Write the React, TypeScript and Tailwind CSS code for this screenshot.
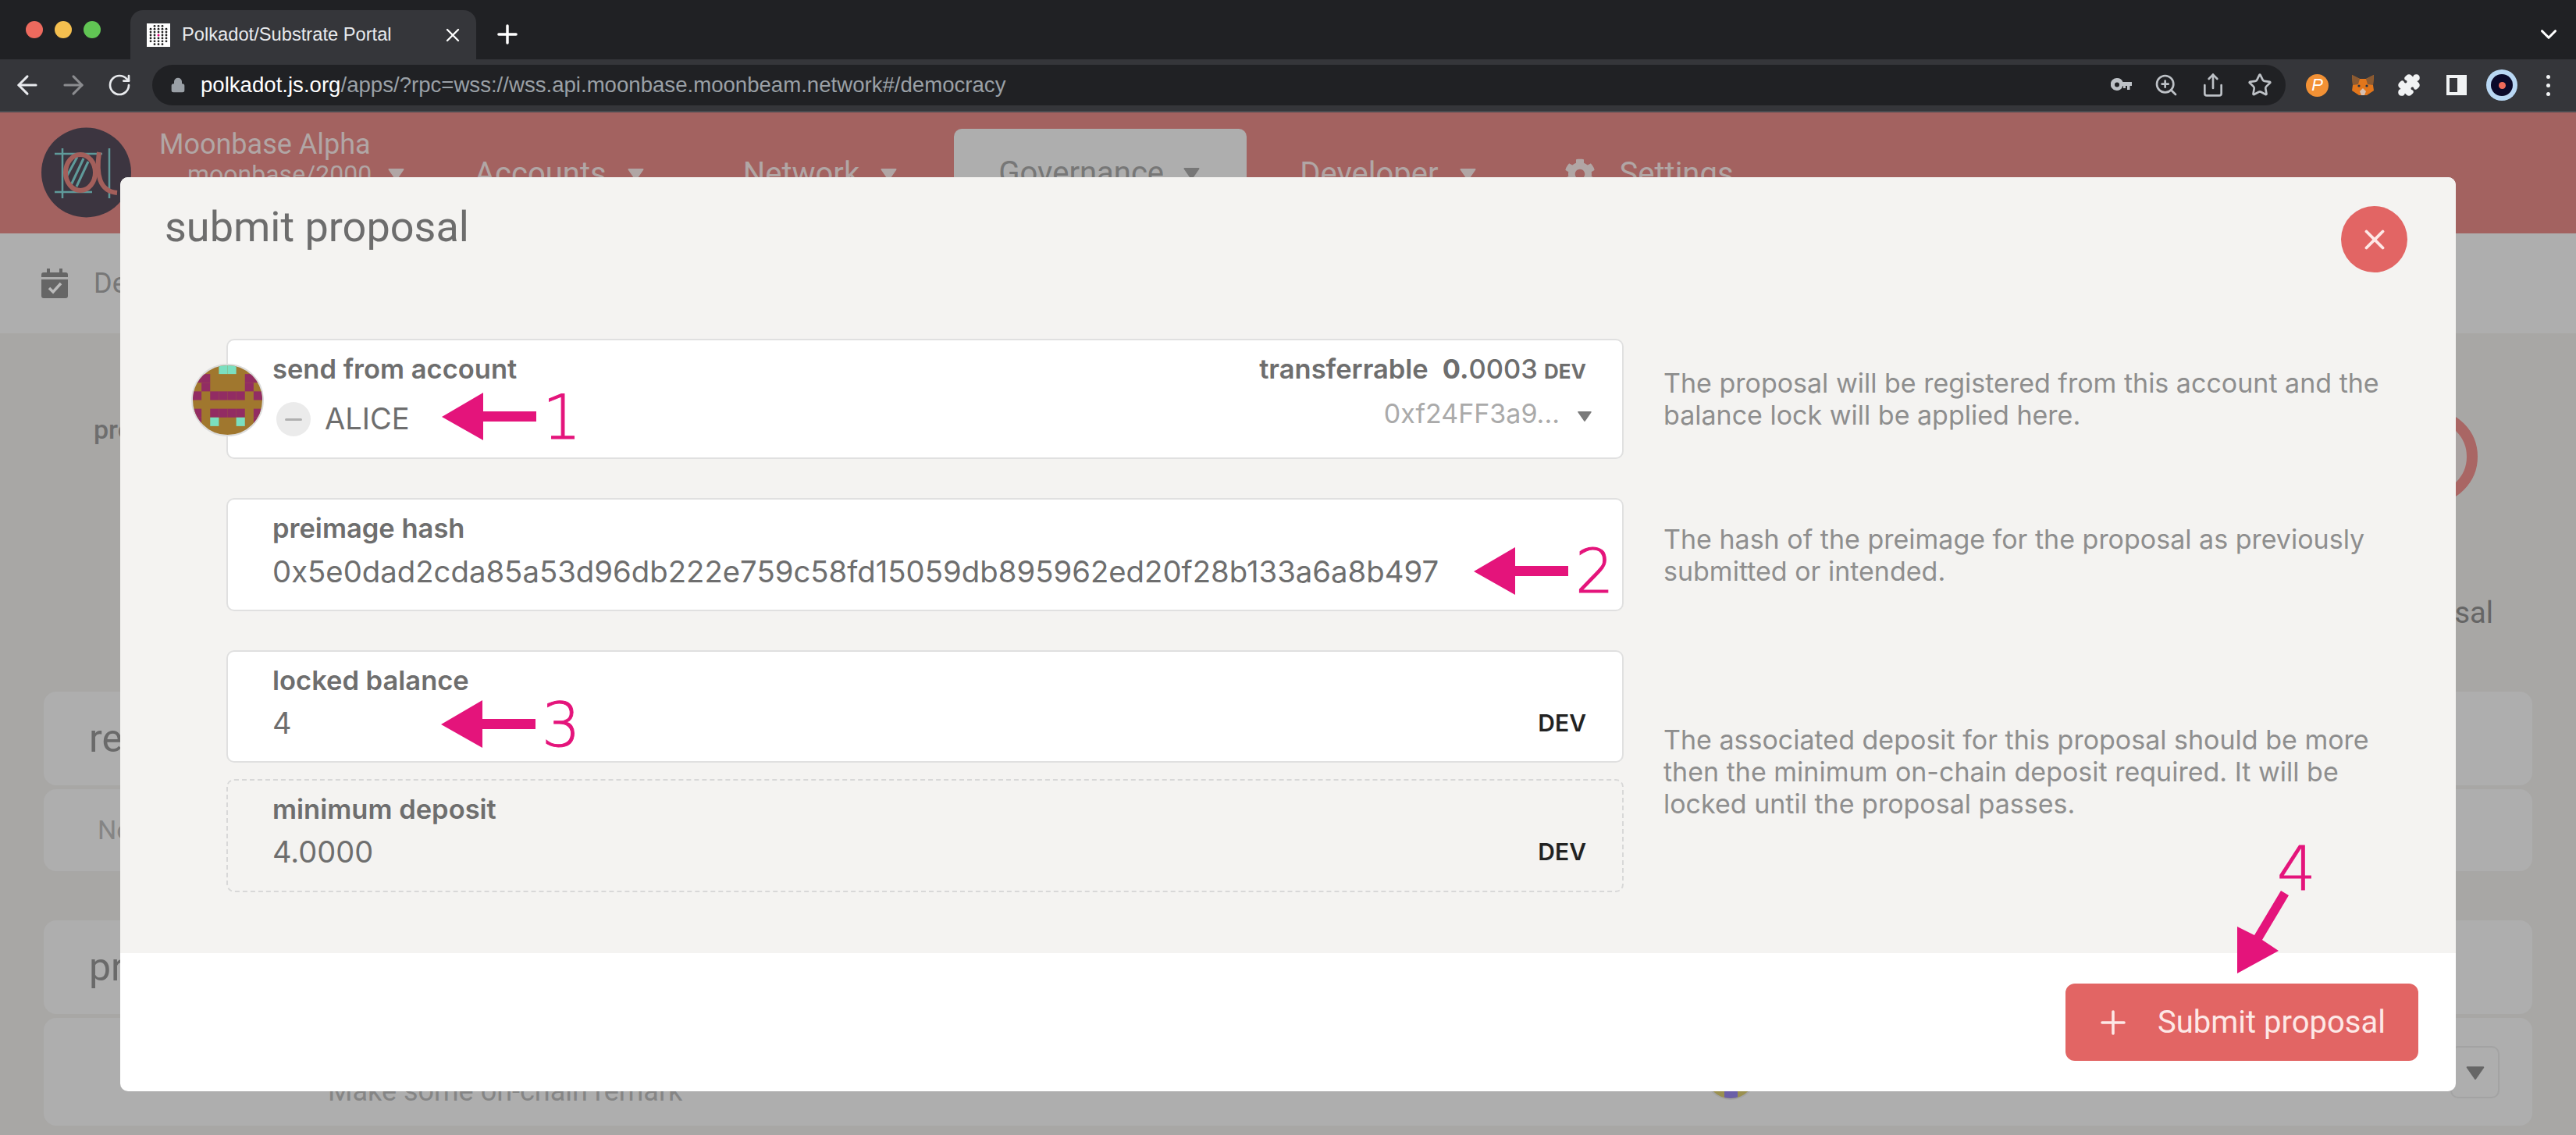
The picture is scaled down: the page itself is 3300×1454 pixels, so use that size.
import { X, Plus, ArrowLeft, ArrowRight, RotateCw, Lock, ZoomIn, Share, Star, Puzzle, ChevronDown } from "lucide-react";
import { FaCog } from "react-icons/fa";

const font = "font-['Roboto',sans-serif]";
const formFont = "font-['Inter',sans-serif]";

function Caret({ className }: { className: string }) {
  return (
    <svg viewBox="0 0 20 16" className={className} fill="currentColor">
      <path d="M1 2 H19 L10 15 Z" stroke="currentColor" strokeWidth="2" strokeLinejoin="round" />
    </svg>
  );
}

const identiconRows = [
  "...TT...",
  "PP....PP",
  ".P....P.",
  "P.PPPP.P",
  "........",
  "P.PPPP.P",
  "P.T..T.P",
  "........",
];

function Identicon() {
  return (
    <svg viewBox="0 0 80 80" className="h-[93px] w-[93px] rounded-full border-[2px] border-[#dcdcdc] bg-[#a0772e]">
      {identiconRows.map((row, y) =>
        row.split("").map((c, x) =>
          c === "." ? null : (
            <rect key={x + "-" + y} x={x * 10} y={y * 10} width="10" height="10" fill={c === "P" ? "#922c63" : "#7bdfc0"} />
          )
        )
      )}
    </svg>
  );
}

function Logo() {
  return (
    <svg viewBox="0 0 115 116" className="h-[116px] w-[115px] shrink-0">
      <circle cx="57.5" cy="58" r="57.5" fill="#3c3540" />
      <g stroke="#5f9a9a" strokeWidth="2.5">
        <path d="M27 27 V91 M87 27 V91 M17 34 H78 M17 83 H65" />
      </g>
      <path d="M38 74 L54 40 M45 76 L60 44 M33 62 L46 38" stroke="#5f9a9a" strokeWidth="3" />
      <ellipse cx="50" cy="58" rx="19" ry="23" fill="none" stroke="#a35f5b" strokeWidth="6" />
      <path d="M74 32 C70 60 74 82 97 84" fill="none" stroke="#a35f5b" strokeWidth="6" />
    </svg>
  );
}

function Favicon() {
  const dots = [];
  for (let y = 0; y < 7; y++) {
    for (let x = 0; x < 5; x++) {
      const cx = 15 + (x - 2) * 5;
      const cy = 15 + (y - 3) * 3.9;
      if (Math.hypot(cx - 15, cy - 15) < 13.5 && !(x === 2 && y === 3)) {
        dots.push(<circle key={x + "-" + y} cx={cx} cy={cy} r="1.4" fill="#222" />);
      }
    }
  }
  return (
    <svg viewBox="0 0 30 30" className="h-[30px] w-[30px] bg-white">
      {dots}
      <circle cx="15" cy="15" r="1.5" fill="#e6007a" />
    </svg>
  );
}

function Fox() {
  return (
    <svg viewBox="0 0 30 28" className="h-[28px] w-[30px]">
      <path d="M1 1 L11 6 H19 L29 1 L28 14 L29 21 L20 27 H10 L1 21 L2 14 Z" fill="#e2761b" />
      <path d="M1 1 L11 6 L9 13 L2 14 Z M29 1 L19 6 L21 13 L28 14 Z" fill="#8a5a32" />
      <path d="M11 22 L15 18 L19 22 L17 27 H13 Z" fill="#d7c1b3" />
      <circle cx="10" cy="15" r="1.6" fill="#233447" />
      <circle cx="20" cy="15" r="1.6" fill="#233447" />
    </svg>
  );
}

function KeyIcon() {
  return (
    <svg viewBox="0 0 27 20" className="h-[20px] w-[27px]" fill="#bdc1c6">
      <path fillRule="evenodd" d="M8 1 A8 8 0 0 1 15.5 6 H27 V11 H24.5 V16 H21 V11 H19 V14 H16 V11 H15.5 A8 8 0 1 1 8 1 Z M8 6.5 A3 3 0 1 0 8 12.5 A3 3 0 1 0 8 6.5 Z" />
    </svg>
  );
}

function CalendarIcon() {
  return (
    <svg viewBox="0 0 34 38" className="h-[38px] w-[34px]">
      <path d="M7 0 H11 V5 H23 V0 H27 V5 H31 A3 3 0 0 1 34 8 V35 A3 3 0 0 1 31 38 H3 A3 3 0 0 1 0 35 V8 A3 3 0 0 1 3 5 H7 Z" fill="#666" />
      <rect x="0" y="11" width="34" height="3" fill="#aeaeae" />
      <path d="M10 25 L15 30 L25 19" fill="none" stroke="#bbb" strokeWidth="3.5" />
    </svg>
  );
}

function Chrome() {
  return (
    <div className="font-['Liberation_Sans',sans-serif]">
      <div className="flex h-[76px] items-end bg-[#202124]">
        <div className="flex h-[49px] w-[167px] items-start gap-[15px] self-start pl-[33px] pt-[27px]">
          <span className="h-[22px] w-[22px] shrink-0 rounded-full bg-[#ed6a5e]" />
          <span className="h-[22px] w-[22px] shrink-0 rounded-full bg-[#f4bf4f]" />
          <span className="h-[22px] w-[22px] shrink-0 rounded-full bg-[#61c554]" />
        </div>
        <div className="flex h-[63px] w-[443px] items-center rounded-t-[16px] bg-[#35363a] pl-[21px] pr-[16px]">
          <Favicon />
          <span className="ml-[15px] text-[23.7px] whitespace-nowrap text-[#e8eaed]">Polkadot/Substrate Portal</span>
          <X className="ml-auto h-[28px] w-[28px] text-white" strokeWidth={2} />
        </div>
        <Plus className="mb-[13px] ml-[21px] h-[38px] w-[38px] text-white" strokeWidth={2.2} />
        <ChevronDown className="mb-[15px] ml-auto mr-[18px] h-[34px] w-[34px] text-white" strokeWidth={2.2} />
      </div>
      <div className="flex h-[68px] items-center border-b-2 border-[#4a4b50] bg-[#35363a]">
        <div className="flex w-[195px] items-center">
          <ArrowLeft className="ml-[16px] h-[38px] w-[38px] text-[#e8eaed]" strokeWidth={1.9} />
          <ArrowRight className="ml-[21px] h-[38px] w-[38px] text-[#8b8c8f]" strokeWidth={1.9} />
          <RotateCw className="ml-[24px] h-[32px] w-[32px] text-[#e8eaed]" strokeWidth={2} />
        </div>
        <div className="flex h-[52px] w-[2733px] items-center rounded-full bg-[#202124] pl-[23px]">
          <Lock className="h-[24px] w-[20px] text-[#9aa0a6]" fill="#9aa0a6" />
          <span className="ml-[19px] text-[27.6px] whitespace-nowrap text-[#9aa0a6]">
            <span className="text-white">polkadot.js.org</span>/apps/?rpc=wss://wss.api.moonbase.moonbeam.network#/democracy
          </span>
          <div className="ml-auto mr-[17px] flex items-center gap-[28px] text-[#bdc1c6]">
            <KeyIcon />
            <ZoomIn className="h-[32px] w-[32px]" strokeWidth={2} />
            <Share className="h-[32px] w-[32px]" strokeWidth={2} />
            <Star className="h-[32px] w-[32px]" strokeWidth={2} />
          </div>
        </div>
        <div className="flex flex-1 items-center pl-[26px]">
          <div className="flex h-[29px] w-[29px] items-center justify-center rounded-full bg-[#f29135]">
            <span className="text-[22px] leading-none text-white italic">P</span>
          </div>
          <div className="ml-[29px]"><Fox /></div>
          <Puzzle className="ml-[29px] h-[30px] w-[30px] text-[#f1f3f4]" fill="#f1f3f4" />
          <div className="ml-[33px] flex h-[26px] w-[26px] items-center justify-start border-[4px] border-[#f1f3f4]">
            <span className="ml-auto h-full w-[8px] bg-[#f1f3f4]" />
          </div>
          <div className="ml-[25px] flex h-[40px] w-[40px] items-center justify-center rounded-full bg-[#b9d8f4]">
            <div className="flex h-[28px] w-[28px] items-center justify-center rounded-full bg-[#0b0a2a]">
              <span className="h-[9px] w-[9px] rounded-full bg-[#ef6a5a]" />
            </div>
          </div>
          <div className="ml-[37px] flex flex-col gap-[6px]">
            <span className="h-[5px] w-[5px] rounded-full bg-[#f1f3f4]" />
            <span className="h-[5px] w-[5px] rounded-full bg-[#f1f3f4]" />
            <span className="h-[5px] w-[5px] rounded-full bg-[#f1f3f4]" />
          </div>
        </div>
      </div>
    </div>
  );
}

function NavItem({ label, className }: { label: string; className: string }) {
  return (
    <div className={"flex items-center gap-[24px] text-[40px] text-[#b1a6a5] " + className}>
      {label}
      <Caret className="h-[16px] w-[27px]" />
    </div>
  );
}

function Background() {
  return (
    <div className={font}>
      <div className="flex h-[155px] items-end bg-[#a36260] pl-[53px]">
        <div className="mb-[20px]"><Logo /></div>
        <div className="mb-[58px] ml-[36px] flex w-[340px] flex-col text-[#b1a6a5]">
          <span className="text-[36px] leading-[40px] whitespace-nowrap">Moonbase Alpha</span>
          <div className="flex items-center gap-[18px] pl-[36px] text-[32px] leading-[36px]">
            moonbase/2000
            <Caret className="h-[16px] w-[27px]" />
          </div>
        </div>
        <NavItem label="Accounts" className="mb-[46px] ml-[64px]" />
        <NavItem label="Network" className="mb-[46px] ml-[124px]" />
        <div className="ml-[70px] flex h-[134px] w-[375px] items-start justify-center gap-[22px] rounded-t-[10px] bg-[#aeaeae] pt-[27px] text-[40px] text-[#777]">
          Governance
          <Caret className="mt-[22px] h-[16px] w-[27px]" />
        </div>
        <NavItem label="Developer" className="mb-[46px] ml-[68px]" />
        <div className="mb-[46px] ml-[110px] flex items-center gap-[31px] text-[40px] text-[#b1a6a5]">
          <FaCog className="h-[40px] w-[40px]" />
          Settings
        </div>
      </div>
      <div className="flex h-[128px] items-center bg-[#aeaeae] pl-[53px] text-[36px] text-[#777]">
        <CalendarIcon />
        <span className="ml-[33px]">Democracy</span>
      </div>
      <div className="h-[1027px] overflow-hidden bg-[#a8a7a5] px-[56px]">
        <div className="flex h-[459px] justify-between pl-[64px] pr-[50px] pt-[98px]">
          <span className="text-[34px] font-medium text-[#6e6e6e]">proposals</span>
          <div className="relative flex flex-col items-end">
            <div className="mr-[20px] h-[120px] w-[120px] rounded-full border-[14px] border-[#a96664] bg-[#a9a3a2]" />
            <span className="mt-[112px] text-[38px] text-[#666]">proposal</span>
          </div>
        </div>
        <div className="flex h-[120px] items-center rounded-[16px] bg-[#aeaeae] pl-[58px] text-[50px] text-[#6a6a6a]">referenda</div>
        <div className="mt-[5px] flex h-[105px] items-center rounded-[16px] bg-[#aeaeae] pl-[69px] text-[34px] text-[#858585]">No active referendums</div>
        <div className="mt-[63px] flex h-[120px] items-center rounded-[16px] bg-[#aeaeae] pl-[58px] text-[50px] text-[#6a6a6a]">proposals</div>
        <div className="relative mt-[5px] h-[138px] rounded-[16px] bg-[#aeaeae]">
          <span className="absolute left-[364px] top-[72px] text-[36px] leading-[44px] text-[#858585]">Make some on-chain remark</span>
          <div className="absolute left-[2127px] top-[37px] flex h-[68px] w-[68px] items-end justify-center overflow-hidden rounded-full border-2 border-[#a3a3a3] bg-[#9a9050]">
            <span className="h-[30px] w-[17px] bg-[#6b5fa8]" />
          </div>
          <div className="absolute right-[42px] top-[36px] flex h-[67px] w-[63px] items-center justify-center rounded-[10px] border-2 border-[#a3a3a3]">
            <Caret className="h-[18px] w-[24px] text-[#666]" />
          </div>
        </div>
      </div>
    </div>
  );
}

function Field({ label, children, dashed, className }: { label?: string; children: React.ReactNode; dashed?: boolean; className: string }) {
  return (
    <div className={"rounded-[10px] border-2 pl-[57px] pr-[46px] pt-[18px] " + (dashed ? "border-dashed border-[#d8d8d8] " : "border-[#e0e0e0] bg-white ") + className}>
      {label && <div className="text-[34.5px] leading-[38px] font-semibold text-[#6e6e6e]">{label}</div>}
      {children}
    </div>
  );
}

function ValueRow({ value }: { value: string }) {
  return (
    <div className="mt-[15px] flex items-center justify-between text-[38px] leading-[40px] text-[#6e6e6e]">
      <span>{value}</span>
      <span className="text-[30px] font-semibold text-[#222222]">DEV</span>
    </div>
  );
}

function Help({ children }: { children: React.ReactNode }) {
  return <p className="ml-[51px] w-[960px] text-[34px] leading-[41px] text-[#8e8e8e]">{children}</p>;
}

function LeftArrow({ className }: { className: string }) {
  return (
    <svg viewBox="0 0 121 61" className={"absolute h-[61px] w-[121px] " + className} fill="#e4147b">
      <path d="M0 31 L53 0 V24 H121 V37 H53 V61 Z" />
    </svg>
  );
}

function Num({ children, className }: { children: string; className: string }) {
  return (
    <span className={"absolute font-['DejaVu_Sans',sans-serif] text-[78px] leading-none font-extralight text-[#e4147b] [-webkit-text-stroke:1px_#e4147b] " + className}>{children}</span>
  );
}

function Modal() {
  return (
    <div className={"absolute left-[154px] top-[227px] h-[1171px] w-[2992px] overflow-hidden rounded-[10px] bg-white " + font}>
      <div className={"h-[994px] bg-[#f4f3f1] pt-[207px] " + formFont}>
        <div className="flex items-center pl-[136px]">
          <Field className="relative h-[154px] w-[1790px]">
            <div className="flex justify-between">
              <span className="text-[34.5px] leading-[38px] font-semibold text-[#6e6e6e]">send from account</span>
              <span className="flex items-baseline text-[34.5px] leading-[38px] font-semibold text-[#6e6e6e]">
                transferrable
                <span className="ml-[18px] font-bold">0.</span>
                <span className="font-medium">0003</span>
                <span className="ml-[8px] text-[26px] font-bold">DEV</span>
              </span>
            </div>
            <div className="mt-[18px] flex items-start justify-between">
              <div className="flex items-center">
                <span className="ml-[5px] mt-[2px] flex h-[44px] w-[44px] items-center justify-center rounded-full bg-[#ebebeb]">
                  <span className="h-[3px] w-[22px] rounded bg-[#b0b0b0]" />
                </span>
                <span className="ml-[18px] text-[38px] leading-[44px] text-[#6e6e6e]">ALICE</span>
              </div>
              <div className="-mt-[5px] flex items-center">
                <span className="text-[34px] leading-[44px] text-[#aaaaaa]">0xf24FF3a9...</span>
                <Caret className="ml-[22px] -mr-[8px] mt-[6px] h-[14px] w-[20px] text-[#7a7a7a]" />
              </div>
            </div>
            <div className="absolute -left-[47px] top-[30px]"><Identicon /></div>
          </Field>
          <Help>The proposal will be registered from this account and the balance lock will be applied here.</Help>
        </div>
        <div className="mt-[50px] flex items-center pl-[136px]">
          <Field label="preimage hash" className="h-[145px] w-[1790px]">
            <div className="mt-[16px] text-[38.3px] leading-[40px] whitespace-nowrap text-[#6e6e6e]">0x5e0dad2cda85a53d96db222e759c58fd15059db895962ed20f28b133a6a8b497</div>
          </Field>
          <Help>The hash of the preimage for the proposal as previously submitted or intended.</Help>
        </div>
        <div className="mt-[50px] flex items-center pl-[136px]">
          <div className="flex w-[1790px] flex-col gap-[21px]">
            <Field label="locked balance" className="h-[144px]">
              <ValueRow value="4" />
            </Field>
            <Field label="minimum deposit" dashed className="h-[145px]">
              <ValueRow value="4.0000" />
            </Field>
          </div>
          <Help>The associated deposit for this proposal should be more then the minimum on-chain deposit required. It will be locked until the proposal passes.</Help>
        </div>
      </div>
      <div className="flex h-[177px] items-start justify-end pr-[48px] pt-[39px]">
        <div className="flex h-[99px] w-[452px] items-center rounded-[12px] bg-[#e26564] pl-[37px] text-[40px] text-[#fde8e6]">
          <Plus className="h-[48px] w-[48px]" strokeWidth={1.8} />
          <span className="ml-[33px]">Submit proposal</span>
        </div>
      </div>
      <h1 className="absolute left-[57px] top-[29px] text-[54px] leading-[70px] font-normal text-[#6d6d6d]">submit proposal</h1>
      <div className="absolute left-[2845px] top-[37px] flex h-[85px] w-[85px] items-center justify-center rounded-full bg-[#e26564]">
        <X className="h-[42px] w-[42px] text-[#fde8e6]" strokeWidth={2.2} />
      </div>
      <LeftArrow className="left-[412px] top-[276px]" />
      <Num className="left-[541px] top-[269px]">1</Num>
      <LeftArrow className="left-[1734px] top-[474px]" />
      <Num className="left-[1864px] top-[466px]">2</Num>
      <LeftArrow className="left-[411px] top-[670px]" />
      <Num className="left-[540px] top-[663px]">3</Num>
      <svg viewBox="0 0 66 106" className="absolute left-[2712px] top-[914px] h-[106px] w-[66px]" fill="#e4147b">
        <path d="M56 0 L66 6 L32 63 L53 77 L0 106 V46 L22 57 Z" />
      </svg>
      <Num className="left-[2763px] top-[847px]">4</Num>
    </div>
  );
}

export default function App() {
  return (
    <div className="relative h-[1454px] w-[3300px] overflow-hidden">
      <Chrome />
      <Background />
      <Modal />
    </div>
  );
}
